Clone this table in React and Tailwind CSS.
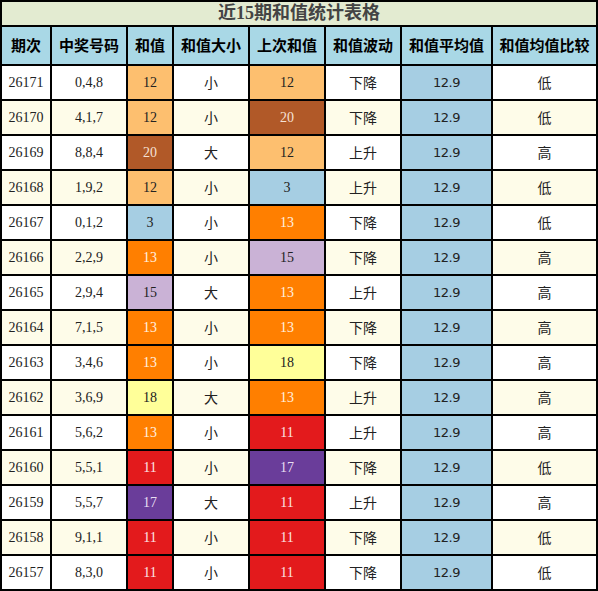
const rows = [
  ['26171', '0,4,8', 12, '小', 12, '下降', '低'],
  ['26170', '4,1,7', 12, '小', 20, '下降', '低'],
  ['26169', '8,8,4', 20, '大', 12, '上升', '高'],
  ['26168', '1,9,2', 12, '小', 3, '上升', '低'],
  ['26167', '0,1,2', 3, '小', 13, '下降', '低'],
  ['26166', '2,2,9', 13, '小', 15, '下降', '高'],
  ['26165', '2,9,4', 15, '大', 13, '上升', '高'],
  ['26164', '7,1,5', 13, '小', 13, '下降', '高'],
  ['26163', '3,4,6', 13, '小', 18, '下降', '高'],
  ['26162', '3,6,9', 18, '大', 13, '上升', '高'],
  ['26161', '5,6,2', 13, '小', 11, '上升', '高'],
  ['26160', '5,5,1', 11, '小', 17, '下降', '低'],
  ['26159', '5,5,7', 17, '大', 11, '上升', '高'],
  ['26158', '9,1,1', 11, '小', 11, '下降', '低'],
  ['26157', '8,3,0', 11, '小', 11, '下降', '低'],
];

// colour per sum value
const sumColor = {
  3: 'bg-[#a6cee3] text-[#222]',
  11: 'bg-[#e31a1c] text-[#fbe4e4]',
  12: 'bg-[#fdbf6f] text-[#222]',
  13: 'bg-[#ff7f00] text-[#fff1e0]',
  15: 'bg-[#cab2d6] text-[#222]',
  17: 'bg-[#6a3d9a] text-[#e8def2]',
  18: 'bg-[#ffff99] text-[#222]',
  20: 'bg-[#b15928] text-[#f6e2d6]',
};

const headers = ['期次', '中奖号码', '和值', '和值大小', '上次和值', '和值波动', '和值平均值', '和值均值比较'];

const cell = 'flex items-center justify-center';

export default function App() {
  return (
    <div className="w-[598px] h-[591px] bg-black p-[2px] grid grid-cols-[48px_74px_44px_74px_74px_74px_89px_103px] grid-rows-[23px_37px_repeat(15,33px)] gap-[2px] font-['Liberation_Serif','Noto_Sans_CJK_SC',serif] text-[14px] text-[#222]">
      <div className="col-span-8 bg-[#e3ebd1] flex items-center justify-center text-[18px] font-bold text-[#444] font-['Liberation_Serif','Noto_Sans_CJK_SC',sans-serif]">
        近15期和值统计表格
      </div>
      {headers.map((h) => (
        <div key={h} className={`${cell} bg-[#a9d8e6] text-[15px] font-bold text-black font-['Noto_Sans_CJK_SC',sans-serif]`}>
          {h}
        </div>
      ))}
      {rows.map((r, i) => {
        const base = i % 2 === 0 ? 'bg-white' : 'bg-[#fefce9]';
        return [
          <div key={r[0] + 'a'} className={`${cell} ${base}`}>{r[0]}</div>,
          <div key={r[0] + 'b'} className={`${cell} ${base}`}>{r[1]}</div>,
          <div key={r[0] + 'c'} className={`${cell} ${sumColor[r[2]]}`}>{r[2]}</div>,
          <div key={r[0] + 'd'} className={`${cell} ${base} font-['Noto_Sans_CJK_SC',sans-serif]`}>{r[3]}</div>,
          <div key={r[0] + 'e'} className={`${cell} ${sumColor[r[4]]}`}>{r[4]}</div>,
          <div key={r[0] + 'f'} className={`${cell} ${base} font-['Noto_Sans_CJK_SC',sans-serif]`}>{r[5]}</div>,
          <div key={r[0] + 'g'} className={`${cell} bg-[#a6cee3] font-['DejaVu_Sans',sans-serif] text-[13px] tracking-[-0.5px]`}>12.9</div>,
          <div key={r[0] + 'h'} className={`${cell} ${base} font-['Noto_Sans_CJK_SC',sans-serif]`}>{r[6]}</div>,
        ];
      })}
    </div>
  );
}
